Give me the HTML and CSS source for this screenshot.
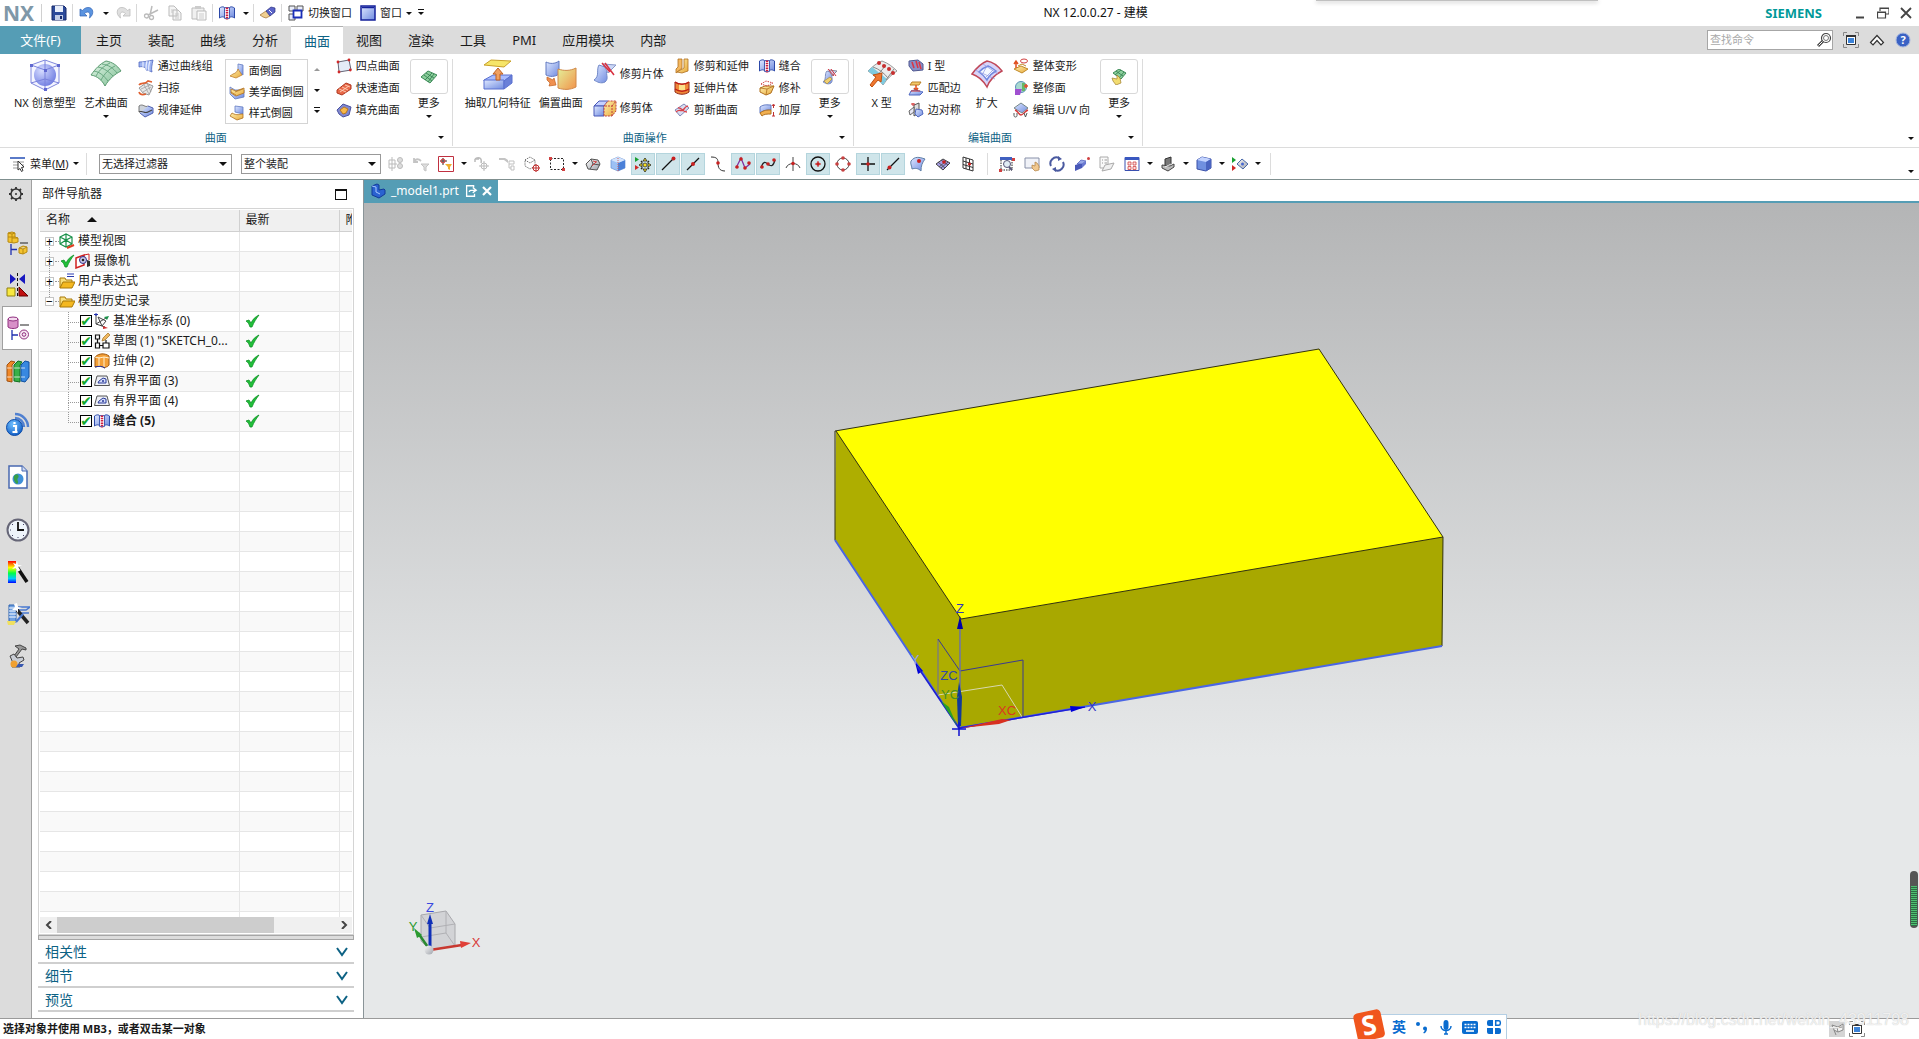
FILE: index.html
```html
<!DOCTYPE html>
<html lang="zh-CN">
<head>
  <meta charset="UTF-8">
  <title>NX 12.0.0.27 - 建模</title>
  <link rel="stylesheet" href="styles.css">
</head>
<body>
<!-- 图标库 -->
<svg class="sprite" aria-hidden="true">
  <defs>
    <linearGradient id="gb" x1="0" y1="0" x2="1" y2="1"><stop offset="0" stop-color="#dfe8ff"/><stop offset="1" stop-color="#6f8be0"/></linearGradient>
    <linearGradient id="gy" x1="0" y1="0" x2="1" y2="1"><stop offset="0" stop-color="#fff0b0"/><stop offset="1" stop-color="#e8a93a"/></linearGradient>
    <linearGradient id="go" x1="0" y1="0" x2="1" y2="1"><stop offset="0" stop-color="#e4f09a"/><stop offset="1" stop-color="#f2934a"/></linearGradient>
    <linearGradient id="gg" x1="0" y1="0" x2="1" y2="1"><stop offset="0" stop-color="#e2f5e6"/><stop offset="1" stop-color="#7fbf95"/></linearGradient>
    <linearGradient id="gs" x1="0" y1="0" x2="1" y2="1"><stop offset="0" stop-color="#f8f8f8"/><stop offset="1" stop-color="#a0a4ac"/></linearGradient>
    <linearGradient id="rain" x1="0" y1="0" x2="0" y2="1"><stop offset="0" stop-color="#f00"/><stop offset=".3" stop-color="#ff0"/><stop offset=".55" stop-color="#0f4"/><stop offset=".8" stop-color="#0cf"/><stop offset="1" stop-color="#00f"/></linearGradient>
    <radialGradient id="ball" cx=".35" cy=".3" r=".8"><stop offset="0" stop-color="#d6dcff"/><stop offset="1" stop-color="#6a78e0"/></radialGradient>
    <radialGradient id="badge" cx=".4" cy=".3" r=".8"><stop offset="0" stop-color="#6fc0ff"/><stop offset="1" stop-color="#0a55c0"/></radialGradient>
  </defs>

  <!-- 标题栏 -->
  <symbol id="save" viewBox="0 0 16 16"><path d="M1 1h12l2 2v12H1z" fill="#2c4a9a" stroke="#16286a"/><path d="M4 1h8v6H4z" fill="#e8eefa"/><path d="M4 10h8v5H4z" fill="#c3cde6"/><path d="M9 11h2v3H9z" fill="#16286a"/></symbol>
  <symbol id="undo" viewBox="0 0 16 16"><path d="M1 4v7h7L5.500 8.500C9 5.500 12 7 10.500 13 16 9 14 2 9 2.500 6.500 2.500 4.500 4 3.500 5.500z" fill="#5b94e0" stroke="#2f63b5" stroke-width=".7"/></symbol>
  <symbol id="redo" viewBox="0 0 16 16"><path d="M15 4v7H8l2.500-2.500C7 5.500 4 7 5.500 13 0 9 2 2 7 2.500c2.500 0 4.500 1.500 5.500 3z" fill="#e0e0e0" stroke="#bdbdbd" stroke-width=".8"/></symbol>
  <symbol id="cut" viewBox="0 0 16 16"><path d="M9 1 7 10M15 5 5 10" stroke="#bbb" stroke-width="1.500"/><circle cx="3.500" cy="11" r="2" fill="none" stroke="#bbb" stroke-width="1.300"/><circle cx="8.500" cy="12.500" r="2" fill="none" stroke="#bbb" stroke-width="1.300"/></symbol>
  <symbol id="copy" viewBox="0 0 16 16"><path d="M2 1h5l3 3v7H2zM6 5h5l3 3v7H6z" fill="#f4f4f4" stroke="#bbb"/><path d="M8 9h4M8 11h4M8 13h4M4 5h2M4 7h2" stroke="#c8c8c8"/></symbol>
  <symbol id="paste" viewBox="0 0 16 16"><path d="M1 3h12v11H1z" fill="#f0f0f0" stroke="#bbb"/><path d="M4 1h6v3H4z" fill="#ccc"/><path d="M6 6h9v9H6z" fill="#fafafa" stroke="#bbb"/><path d="M8 9h5M8 11h5M8 13h5" stroke="#ccc"/></symbol>
  <symbol id="book" viewBox="0 0 16 16"><path d="M.500 3c3-2 5-1 5 0v10c0-1-2-2-5 0zM15.500 3c-3-2-5-1-5 0v10c0-1 2-2 5 0z" fill="url(#gb)" stroke="#2b48a8"/><path d="M5.500 2.500h5v11h-5z" fill="#fff" stroke="#2b48a8" stroke-width=".8"/><path d="M8 2.500v12" stroke="#d02040" stroke-width="2.500" stroke-dasharray="1.500 .800"/></symbol>
  <symbol id="pen" viewBox="0 0 16 16"><path d="M0 10 6 6l4 1v4l-4 2-3-1z" fill="#f0cf90" stroke="#a07030" stroke-width=".7"/><path d="m6 6 5-4 4 1v4l-5 4z" fill="#5a63c8" stroke="#2a2f80" stroke-width=".7"/><path d="m9 5 3 3" stroke="#fff"/></symbol>
  <symbol id="switch" viewBox="0 0 16 16"><path d="M1 1h6v5H1zM9 1h6v5H9zM1 9h6v6H1z" fill="#e8ecf8" stroke="#555" /><path d="M5.500 5.500h8v7h-8z" fill="#fff" stroke="#1a2fb8" stroke-width="1.800"/></symbol>
  <symbol id="window" viewBox="0 0 16 16"><path d="M1 1h14v14H1z" fill="url(#gb)" stroke="#14209a" stroke-width="1.500"/><path d="M2 2.500h12" stroke="#14209a" stroke-width="1.500"/></symbol>
  <symbol id="fit" viewBox="0 0 16 16"><path d="M4 .500H.500V4M12 .500h3.500V4M4 15.500H.500V12M12 15.500h3.500V12" fill="none" stroke="#888"/><path d="M3.500 3.500h9v9h-9z" fill="#fff" stroke="#333"/><path d="M3 4h10" stroke="#333" stroke-width="2"/><path d="M5 6h6v5H5z" fill="#3c83d8"/></symbol>
  <symbol id="lens" viewBox="0 0 16 16"><circle cx="10" cy="6" r="4.500" fill="#fff" stroke="#444" stroke-width="1.200"/><circle cx="10" cy="6" r="2.500" fill="none" stroke="#555" stroke-width=".8"/><path d="m7 9-5 5" stroke="#444" stroke-width="3"/><path d="m6.500 9.500-4 4" stroke="#fff"/></symbol>
  <symbol id="up" viewBox="0 0 16 16"><path d="m1.500 10.500 6.500-7 6.500 7-2.500 2.500-4-4.500L4 13z" fill="#fff" stroke="#333" stroke-width="1.200"/></symbol>

  <!-- 功能区：大图标 -->
  <symbol id="nxshape" viewBox="0 0 32 32"><path d="M16 1 30 6v18l-14 7L2 24V6z" fill="#f4f5ff" stroke="#8088dc"/><circle cx="16" cy="16" r="11" fill="url(#ball)"/><path d="m2 6 14 5 14-5M16 11v20M16 1v10M2 24l14-4 14 4" fill="none" stroke="#7a82dc"/><path d="M1 5h3v3H1zM28 5h3v3h-3zM15 10h3v3h-3zM15 29h3v3h-3z" fill="#6068d0"/></symbol>
  <symbol id="artsurf" viewBox="0 0 32 32"><path d="M1 16C6 9 10 5 16 2c6 1 11 4 15 10-6 3-12 8-16 15-3-6-8-10-14-11z" fill="url(#gg)" stroke="#5a9a70"/><path d="M4 12c6 1 10 5 14 10M8 8c6 1 11 5 15 9M12 5c7 1 11 4 15 9M6 17c4-7 8-10 14-13M11 21c4-7 8-11 14-14" fill="none" stroke="#5fa078" stroke-width=".9"/></symbol>
  <symbol id="extract" viewBox="0 0 32 32"><path d="m9 1 20 1-7 6L2 6z" fill="#f6e568" stroke="#c8a028"/><path d="m2 21 9-5h19l-8 6H2z" fill="#a8bcff" stroke="#5a70d0"/><path d="M2 21h20v9H2z" fill="url(#gb)" stroke="#5a70d0"/><path d="m22 22 8-6v8l-8 6z" fill="#6a80d8" stroke="#5a70d0"/><path d="m16 9 5 6h-3v6h-4v-6h-3z" fill="#f0a060" stroke="#c06020"/></symbol>
  <symbol id="offset" viewBox="0 0 32 32"><path d="M1 3c4 2 9 2 13-1v13c-4 3-9 3-13 1z" fill="url(#gb)" stroke="#6078c0"/><path d="M13 10c6 2 12 2 18-1v19c-6 3-12 3-18 1z" fill="url(#go)" stroke="#d08848"/><path d="m2 18 6 3 1-2 2 7-7 1 1-3-3-3z" fill="#f09050" stroke="#c06020" stroke-width=".7"/></symbol>
  <symbol id="trimsheet" viewBox="0 0 24 24"><path d="m6 3 9 3c-4 5 2 10-3 14-4 2-8 0-11-2 6-4 2-10 5-15z" fill="url(#gb)" stroke="#7088c8"/><path d="m10 2 13 1-8 8z" fill="#ccd8f8" stroke="#8898c8"/><path d="m9 1 8 9M12 1l9 12" stroke="#d83040" stroke-width="1.500"/></symbol>
  <symbol id="trimbody" viewBox="0 0 24 24"><path d="m1 10 5-5h9l-4 5z" fill="#c4d0ff" stroke="#4858b8"/><path d="M1 10h10v10H1z" fill="url(#gb)" stroke="#4858b8"/><path d="m11 10 4-5h8v10l-4 5h-8z" fill="url(#gy)" stroke="#c04040" stroke-dasharray="2 1"/><path d="M19 20V10h-8M19 10l4-5" fill="none" stroke="#c04040" stroke-dasharray="2 1"/></symbol>
  <symbol id="xform" viewBox="0 0 32 32"><path d="M2 12C7 7 11 4 16 2c6 2 11 6 15 10-5 3-10 8-14 14-4-6-9-10-15-14z" fill="#ececec" stroke="#999"/><path d="M2 12c5 4 10 8 15 14l4-6C16 16 11 12 6 8z" fill="#7fcbe0"/><path d="M7 8c6 2 11 6 15 11M11 17l9-11M20 21 28 10" fill="none" stroke="#888"/><path d="m4 26 6-8-3-2 9-2-1 9-3-2-6 7z" fill="#f07830" stroke="#c05010"/><circle cx="13" cy="4" r="2" fill="#c83030"/><circle cx="18" cy="7" r="2" fill="#c83030"/><circle cx="23" cy="10" r="2" fill="#c83030"/><circle cx="27" cy="14" r="2" fill="#c83030"/></symbol>
  <symbol id="enlarge" viewBox="0 0 32 32"><path d="M1 15C6 8 11 4 16 2c6 1 11 5 15 10-6 3-12 8-15 16-4-7-9-11-15-13z" fill="#d8d4f8" stroke="#c04858" stroke-width="1.500"/><path d="M8 13c3-3 6-5 9-6 3 1 5 3 8 5-4 2-7 5-9 9-2-3-5-6-8-8z" fill="#f4f8ff" stroke="#7088e0" stroke-width="1.500"/><path d="m4 11 20 9M12 5l15 10M16 7l-5 9M23 10l-9 9" fill="none" stroke="#8a94e0" stroke-width=".7"/></symbol>
  <symbol id="moregreen" viewBox="0 0 16 16"><path d="M0 8 7 2l9 4-7 8z" fill="#8ccf9c" stroke="#3d8a58"/><path d="m3 6 8 6M5 4l8 5M4 11l7-7M7 13l6-8" stroke="#2f7a4c" stroke-width=".8"/></symbol>
  <symbol id="moretrim" viewBox="0 0 16 16"><path d="m5 2 6 2c-3 3 1 7-2 10-3 2-6 0-8-1 4-3 1-8 4-11z" fill="url(#gb)" stroke="#8090c0"/><path d="m7 1 8 1-5 5z" fill="#d0d8f0" stroke="#889"/><path d="m6 0 6 7M9 0l5 7" stroke="#d83040"/><path d="m2 12 6-4 2 2-5 5z" fill="#f0d070" stroke="#a08030" stroke-width=".6"/></symbol>
  <symbol id="moreedit" viewBox="0 0 16 16"><path d="m2 4 6-4 7 4-5 6z" fill="#8ccf9c" stroke="#3d8a58"/><path d="m5 2 7 5M4 6l6-5M8 9l5-6" stroke="#2f7a4c" stroke-width=".8"/><path d="m1 9 5 1v-4l3 3 1 5-5 2-3-4z" fill="#f2dc70" stroke="#a08030" stroke-width=".7"/></symbol>

  <!-- 功能区：小图标 -->
  <symbol id="curves" viewBox="0 0 16 16"><path d="M1 4c5 0 9-1 14-2-1 5-2 9-1 12-3-1-3-2-6-2 0-3-3-4-7-3z" fill="#9cb2f0" stroke="#5068c0" stroke-width=".8"/><path d="M5 4v5M9 3c-1 3-1 6-1 9M12 3c-1 3-2 6-1 10" fill="none" stroke="#e8eeff" stroke-width="1.200"/></symbol>
  <symbol id="sweep" viewBox="0 0 16 16"><path d="m1 8 7-5 7 3-4 9-6-2z" fill="#e6e6e6" stroke="#999"/><path d="m3 9 9-4M5 12l8-5M6 5l5 9M9 3l4 9" stroke="#999" stroke-width=".7"/><path d="M1 5c2-3 6 0 9-4l4 1M1 12c1 3 4 3 7 2" fill="none" stroke="#e06030" stroke-width="1.600"/></symbol>
  <symbol id="lawext" viewBox="0 0 16 16"><path d="M1 4c4-3 6 2 9 0v6c-4 2-6-2-9 0z" fill="#ccd2da" stroke="#777"/><path d="m10 4 5 2v5l-8 4-5-4" fill="url(#gb)" stroke="#5060b0"/><path d="M1 10c4-2 5 2 9 0l4-2" fill="none" stroke="#444" stroke-width="1.200"/></symbol>
  <symbol id="blendface" viewBox="0 0 16 16"><path d="m9 1 5 1v10L9 9z" fill="url(#gb)" stroke="#6078c0" stroke-width=".8"/><path d="m9 6 4 6-6 3-6-2 3-2c3-1 4-2 5-5z" fill="url(#gy)" stroke="#c08030" stroke-width=".8"/></symbol>
  <symbol id="blendart" viewBox="0 0 16 16"><path d="m1 3 5 3h9v7l-9 2-5-5z" fill="url(#gb)" stroke="#6078c0" stroke-width=".8"/><path d="m2 5 5 2 8-3v5l-8 3-5-3z" fill="url(#gy)" stroke="#b07020" stroke-width=".8"/><path d="m6 8 8-3M2 8l5 3" stroke="#b07020" stroke-width=".7"/></symbol>
  <symbol id="blendstyle" viewBox="0 0 16 16"><path d="m6 1 8 1v7l-8-2z" fill="url(#gb)" stroke="#6078c0" stroke-width=".8"/><path d="M3 8c5 3 8 1 11 1v4l-6 2-7-4z" fill="url(#gy)" stroke="#b07020" stroke-width=".8"/></symbol>
  <symbol id="fourpt" viewBox="0 0 16 16"><path d="m2 4 11-2 2 10-12 2z" fill="#e4ebf8" stroke="#667"/><circle cx="2" cy="4" r="1.400" fill="#d02828"/><circle cx="13" cy="2" r="1.400" fill="#d02828"/><circle cx="14.300" cy="12" r="1.400" fill="#d02828"/><circle cx="3" cy="14" r="1.400" fill="#d02828"/></symbol>
  <symbol id="rapid" viewBox="0 0 16 16"><path d="m1 10 9-7 5 2v4l-9 6-5-2z" fill="#e86848" stroke="#b03820"/><path d="m3 9 7 3M6 7l6 3M9 5l5 2M4 12l9-6" stroke="#ffd0b8" stroke-width=".9"/></symbol>
  <symbol id="fillsurf" viewBox="0 0 16 16"><path d="m1 8 6-6 8 3-2 8-6 2-4-3z" fill="#8088d0" stroke="#4a52a0"/><path d="m4 8 4-3 4 2-2 4-3 1z" fill="#f8b848" stroke="#b87820"/></symbol>
  <symbol id="trimext" viewBox="0 0 16 16"><path d="M4 1h4v9l-6 5v-4l2-2z" fill="#f4b860" stroke="#b07020" stroke-width=".8"/><path d="M10 1h4v12l-6 2-5-1 7-4z" fill="url(#gy)" stroke="#b07020" stroke-width=".8"/></symbol>
  <symbol id="extsheet" viewBox="0 0 16 16"><path d="M1 2c4 3 10 3 14 0v10c-4 3-10 3-14 0z" fill="#f08838" stroke="#902818"/><path d="M5 4v6c2 1 4 1 6 0V4c-2 1-4 1-6 0z" fill="#fbe08a"/><path d="M1 2c4 3 10 3 14 0M1 9c4 3 10 3 14 0" fill="none" stroke="#c02018" stroke-width="1.500"/></symbol>
  <symbol id="snip" viewBox="0 0 16 16"><path d="m1 8 9-6 5 4-9 8z" fill="#d8dcf0" stroke="#8088b8"/><path d="M2 10c4-4 5 1 8-3s2-2 4-3M4 6c4-1 4 4 9 4" fill="none" stroke="#d84048" stroke-width="1.400"/></symbol>
  <symbol id="patch" viewBox="0 0 16 16"><path d="m1 8 5-2h9l-3 7-5 2-6-3z" fill="url(#gy)" stroke="#b07020"/><path d="m7 15 1-6 7-3M1 8l7 1" fill="none" stroke="#b07020" stroke-width=".8"/><path d="m2 4 5-3 7 2-6 3z" fill="none" stroke="#d04040" stroke-dasharray="1.500 1"/></symbol>
  <symbol id="thicken" viewBox="0 0 16 16"><path d="M1 5c4-3 7-2 11-2v5C8 8 5 8 1 11z" fill="url(#gb)" stroke="#6078c0"/><path d="M1 11c4-3 7-3 11-3v4c-4 0-7 0-9 2z" fill="#f2b050" stroke="#b07020"/><path d="M14.500 3v3M14.500 10v4M13 14h3M13 4l1.500-2L16 4" stroke="#c03030" fill="none"/></symbol>
  <symbol id="iform" viewBox="0 0 16 16"><path d="m1 3 9-1 5 4v6l-10 1-4-5z" fill="#8890c8" stroke="#505890"/><path d="m4 4 2 6M8 3l2 7M11 4l2 7" stroke="#d83848" stroke-width="1.600"/></symbol>
  <symbol id="matchedge" viewBox="0 0 16 16"><path d="M4 2h9l-2 3H2z" fill="#f4c868" stroke="#b88028"/><path d="M8 5v5M6 8l2 3 2-3" stroke="#e05020" fill="none" stroke-width="1.500"/><path d="M3 11c4-2 8 0 12 1l-3 3H1z" fill="url(#gb)" stroke="#5068c0"/><path d="M3 11h9" stroke="#d03030"/></symbol>
  <symbol id="edgesym" viewBox="0 0 16 16"><path d="m6 3 5-2v10l-5 3z" fill="#ddd" stroke="#555"/><path d="m8 7 6 1 1 4-5 3-3-3z" fill="url(#gb)" stroke="#5068c0"/><path d="m1 9 5-4v5l-4 3z" fill="#e8e8f4" stroke="#666"/><path d="M3 2h4M5 1v3" stroke="#d03030"/></symbol>
  <symbol id="globaldef" viewBox="0 0 16 16"><path d="m1 11 7-3 7 3-6 4z" fill="url(#gy)" stroke="#c08828"/><path d="M3 10V4M1 6l2-3 2 3" stroke="#e05020" fill="none" stroke-width="1.500"/><ellipse cx="11" cy="3" rx="3.500" ry="2" fill="none" stroke="#d04040"/><path d="m5 8 4-2 4 2" fill="none" stroke="#c08828"/></symbol>
  <symbol id="refine" viewBox="0 0 16 16"><circle cx="8" cy="7" r="5.500" fill="#a8d8d0" stroke="#5890b8"/><path d="M2 9h7l-2 6H2z" fill="#a050d0"/><path d="M9 3h3v8H9z" fill="#68b868"/><path d="M11 6h4M13 4v4" stroke="#e05030" stroke-width="1.600"/></symbol>
  <symbol id="edituv" viewBox="0 0 16 16"><path d="m1 6 7-5 7 5-6 5z" fill="url(#gb)" stroke="#788"/><path d="M2 8c3 1 4 5 6 5s4-4 7-5" fill="none" stroke="#d83838" stroke-width="1.400"/><path d="M1 11v2.500c0 2 3 2 3 0V11M11 11l1.500 4 1.500-4" fill="none" stroke="#555"/></symbol>

  <!-- 选择条 -->
  <symbol id="menu" viewBox="0 0 16 16"><path d="M0 2h15" stroke="#5a7ac8" stroke-width="2"/><path d="M3 6h11M3 9h11M3 12h9" stroke="#999"/><path d="m8 5 6 6-2.500.5 1.500 3-1.500 1-1.500-3L8 14z" fill="#fff" stroke="#333"/></symbol>
  <symbol id="f1" viewBox="0 0 16 16"><path d="M1 4h6v8H1zM4 1v14M1 8h8" stroke="#bbb" fill="none"/><circle cx="12" cy="4" r="2.500" fill="#ddd" stroke="#bbb"/><circle cx="12" cy="10" r="2.500" fill="#ddd" stroke="#bbb"/></symbol>
  <symbol id="f2" viewBox="0 0 16 16"><path d="M1 2v4h4M1 6c2-4 5-3 7-1" stroke="#c4c4c4" fill="none" stroke-width="1.800"/><path d="M8 8h8l-3 3v4l-2-1v-3z" fill="#ddd" stroke="#c4c4c4"/></symbol>
  <symbol id="f3" viewBox="0 0 16 16"><path d="M.500.500h15v15H.500z" fill="#fff" stroke="#c03040"/><path d="M5 2v7M2 5h7" stroke="#333"/><circle cx="5" cy="5" r="2" fill="none" stroke="#d03030"/><path d="M7 8h7l-2 3v3l-2-1v-2z" fill="#f0b030"/></symbol>
  <symbol id="f4" viewBox="0 0 16 16"><path d="M1 3h4M1 3v3M1 3c5-3 7 0 6 4" stroke="#bbb" fill="none" stroke-width="1.500"/><circle cx="10" cy="10" r="3" fill="none" stroke="#bbb"/><path d="M10 5v10M5 10h10" stroke="#bbb"/></symbol>
  <symbol id="f5" viewBox="0 0 16 16"><path d="M0 2h6l3 2v3L5 4H0z" fill="#c4c4c4"/><path d="M10 5h5v3h-5zM12 10h3v4h-3zM10 8v4h2" stroke="#c0c0c0" fill="none"/></symbol>
  <symbol id="f6" viewBox="0 0 16 16"><path d="m1 4 5-3 5 3v6l-5 3-5-3zM1 4l5 3 5-3" fill="none" stroke="#444" stroke-dasharray="1 1.200"/><circle cx="12" cy="12" r="3" fill="#fff" stroke="#c03030"/><path d="M12 8v8M8 12h8" stroke="#c03030"/></symbol>
  <symbol id="f7" viewBox="0 0 16 16"><path d="M1.500 2.500h13v11h-13z" fill="none" stroke="#222" stroke-dasharray="2 1.500"/><path d="M0 1h3v3H0zM13 12h3v3h-3z" fill="#d04040"/></symbol>
  <symbol id="f8" viewBox="0 0 16 16"><path d="m1 8 5-5 7 1 2 4-3 6-9-1z" fill="url(#gs)" stroke="#555"/><path d="m6 3 2 5-3 5M8 8l7 1" stroke="#555" fill="none"/><path d="m8 5 4 1M7 10l4-4" stroke="#d04040"/></symbol>
  <symbol id="f9" viewBox="0 0 16 16"><path d="m1 4 7-3 7 3v8l-7 3-7-3z" fill="#9cc0f4" stroke="#6890d0" stroke-width=".7"/><path d="M8 7v8l7-3V4z" fill="#4a80d8"/><path d="m1 4 7-3 7 3-7 3z" fill="#d4e4fc"/><path d="M8 2v13" stroke="#d06060" stroke-dasharray="1 1"/></symbol>
  <symbol id="s1" viewBox="0 0 16 16"><path d="m0 1 4 2.500L0 6z" fill="#18a030"/><path d="m0 9 4 2.500L0 14z" fill="#d02828"/><circle cx="10" cy="9" r="2" fill="#f8e020" stroke="#333" stroke-width=".8"/><path d="m10 2 2 3h-4zM10 16l2-3h-4zM4 9l3-2v4zM16 9l-3-2v4z" fill="#f8e020" stroke="#222" stroke-width=".8"/><path d="m6 5 1.500 1.500M14 5l-1.500 1.500M6 13l1.500-1.500M14 13l-1.500-1.500" stroke="#222" stroke-width="1.500"/></symbol>
  <symbol id="s2" viewBox="0 0 16 16"><path d="M2 14 13 3" stroke="#111" stroke-width="1.300"/><circle cx="13.500" cy="2.500" r="2" fill="#c82020"/></symbol>
  <symbol id="s3" viewBox="0 0 16 16"><path d="M2 14 14 2" stroke="#111" stroke-width="1.300"/><circle cx="8" cy="8" r="2" fill="#c82020"/></symbol>
  <symbol id="s4" viewBox="0 0 16 16"><path d="M1 1c6 0 7 2 7 6s1 8 7 8" fill="none" stroke="#333"/><circle cx="8" cy="7" r="1.800" fill="#c82020"/></symbol>
  <symbol id="s5" viewBox="0 0 16 16"><path d="M1 12 6 2l4 10 5-4" fill="none" stroke="#8030a0" stroke-width="1.300"/><circle cx="2" cy="11" r="1.800" fill="#c82020"/><circle cx="6" cy="3" r="1.800" fill="#c82020"/><circle cx="10" cy="12" r="1.800" fill="#c82020"/><circle cx="14" cy="7" r="1.800" fill="#c82020"/></symbol>
  <symbol id="s6" viewBox="0 0 16 16"><path d="M1 12C4 2 7 8 9 9s4 2 6-5" fill="none" stroke="#222" stroke-width="1.300"/><circle cx="2" cy="11" r="1.800" fill="#c82020"/><circle cx="8" cy="8" r="1.800" fill="#c82020"/><circle cx="14" cy="4" r="1.800" fill="#c82020"/></symbol>
  <symbol id="s7" viewBox="0 0 16 16"><path d="M8 1v14M1 12c2-6 12-6 14 0" fill="none" stroke="#444"/><circle cx="8" cy="7.500" r="1.800" fill="#c82020"/></symbol>
  <symbol id="s8" viewBox="0 0 16 16"><circle cx="8" cy="8" r="7" fill="none" stroke="#111" stroke-width="1.300"/><path d="M8 5v6M5 8h6" stroke="#c82020"/><circle cx="8" cy="8" r="1.800" fill="#c82020"/></symbol>
  <symbol id="s9" viewBox="0 0 16 16"><circle cx="8" cy="8" r="6" fill="none" stroke="#444"/><circle cx="8" cy="2" r="1.800" fill="#c84040"/><circle cx="8" cy="14" r="1.800" fill="#c84040"/><circle cx="2" cy="8" r="1.800" fill="#c84040"/><circle cx="14" cy="8" r="1.800" fill="#c84040"/></symbol>
  <symbol id="s10" viewBox="0 0 16 16"><path d="M8 1v14M1 8h14" stroke="#111" stroke-width="1.300"/><circle cx="8" cy="8" r="1.800" fill="#c82020"/></symbol>
  <symbol id="s11" viewBox="0 0 16 16"><path d="M2 14 14 2" stroke="#111" stroke-width="1.300"/><circle cx="4.500" cy="11.500" r="2" fill="#c82020"/></symbol>
  <symbol id="s12" viewBox="0 0 16 16"><path d="M1 5c4-5 8-4 14-2-3 4-4 7-4 12-3-3-6-3-9-2 0-3-2-5-1-8z" fill="url(#gb)" stroke="#6080a8"/><circle cx="9" cy="5" r="2" fill="#c82020"/></symbol>
  <symbol id="s13" viewBox="0 0 16 16"><path d="m1 8 7-5 7 4-7 7z" fill="#a8a0e8" stroke="#444"/><path d="m3 6 7 6M6 4l7 5M4 11l7-6M6 12l7-6" stroke="#444" stroke-width=".8"/><circle cx="9" cy="6" r="1.800" fill="#c82020"/></symbol>
  <symbol id="s14" viewBox="0 0 16 16"><path d="M3 1v11l10 3V4zM3 5l10 3M3 8.500l10 3M6 2v11M9.500 3v11" fill="none" stroke="#333"/><circle cx="9.500" cy="8" r="1.600" fill="#c82020"/></symbol>
  <symbol id="v1" viewBox="0 0 16 16"><path d="M1 1h12v3H1z" fill="#4060c0"/><path d="M2 4v10h11V4" fill="none" stroke="#222" stroke-dasharray="1.500 1"/><circle cx="8" cy="8" r="3.500" fill="#e0ecf4" stroke="#557"/><path d="m10 11 3 3" stroke="#557" stroke-width="2"/><path d="M13 2h3v3h-3zM0 13h3v3H0z" fill="#d04040"/></symbol>
  <symbol id="v2" viewBox="0 0 16 16"><path d="M1 2h14v10H1z" fill="#f0f2f8" stroke="#8890a8"/><path d="m8 9 3 1V6l2 1 2 3v4l-4 1-3-3z" fill="#f0c890" stroke="#b08040" stroke-width=".7"/></symbol>
  <symbol id="v3" viewBox="0 0 16 16"><path d="M2 10a6 6 0 0 1 8-8M14 6a6 6 0 0 1-8 8" fill="none" stroke="#4a5aa0" stroke-width="2"/><path d="m9 0 4 3-4 2zM7 16l-4-3 4-2z" fill="#4a5aa0"/></symbol>
  <symbol id="v4" viewBox="0 0 16 16"><path d="m1 9 7-2v5l-7 3z" fill="#4858b8"/><path d="m3 8 4-4 5 1-4 3z" fill="#98a8e8" stroke="#4858b8" stroke-width=".7"/><path d="m8 8 4-3v3l-4 4z" fill="#6878d0"/><circle cx="14.500" cy="2.500" r="1.500" fill="#d04040"/></symbol>
  <symbol id="v5" viewBox="0 0 16 16"><path d="M1 1h8v11H1z" fill="#fafafa" stroke="#aaa"/><path d="M3 4h1M5.500 4H8M3 7h1M5.500 7H8" stroke="#999"/><path d="m6 9 9-2-3 6-9 2z" fill="#f0f0f0" stroke="#aaa"/></symbol>
  <symbol id="v6" viewBox="0 0 16 16"><path d="M1 1.500h14v13H1z" fill="#fff" stroke="#3a50b0"/><path d="M1 1h14v3H1z" fill="#3a58c0"/><path d="M4 6h3v3H4zM9 6h3v3H9zM4 10.500h3v3H4zM9 10.500h3v3H9z" fill="#fbe0e0" stroke="#d04848" stroke-width=".8"/></symbol>
  <symbol id="v7" viewBox="0 0 16 16"><path d="m5 3 6-2v7l-6 3z" fill="#777" stroke="#333"/><path d="m2 9 8 1 4-2v3l-6 4-6-3z" fill="#bbb" stroke="#444"/><path d="m5 11 6-3" stroke="#eee"/></symbol>
  <symbol id="v8" viewBox="0 0 16 16"><path d="m1 4 5-3 9 2v9l-5 3-9-2z" fill="#7090e0" stroke="#3a50a8"/><path d="m1 4 5-3 9 2-5 3z" fill="#c4d4ff"/><path d="m10 6 5-3v9l-5 3z" fill="#4a64c0"/></symbol>
  <symbol id="v9" viewBox="0 0 16 16"><path d="m0 1 4 3-4 3z" fill="#18a030"/><path d="m0 9 4 3-4 3z" fill="#d02828"/><path d="m5 8 5-5 6 5-5 5z" fill="url(#gs)" stroke="#4868a8"/><circle cx="10.500" cy="8" r="1.500" fill="#4868d0"/></symbol>

  <!-- 资源条 -->
  <symbol id="gear" viewBox="0 0 16 16"><circle cx="8" cy="8" r="5" fill="none" stroke="#333" stroke-width="1.400"/><circle cx="8" cy="8" r="1" fill="#333"/><path d="M8 1v2M8 13v2M1 8h2M13 8h2M3 3l1.500 1.500M11.500 11.500 13 13M3 13l1.500-1.500M11.500 4.500 13 3" stroke="#333" stroke-width="1.800"/></symbol>
  <symbol id="assy" viewBox="0 0 24 24"><path d="M2 2 6 1l3 1v4l3 1v4l-4 1-6-1z" fill="#f4c430" stroke="#b88a10"/><path d="m2 6 7 0M2 2l4 1 3-1M6 3v9M6 7l6 0" stroke="#b88a10" fill="none"/><path d="M14 12h8" stroke="#222"/><path d="M5 13v11M5 18.500h6" stroke="#2030b0" stroke-width="1.300"/><path d="m13 17 4-2 4 1v5l-4 2-4-1zM13 17l4 1 4-2M17 18v5" fill="#f4c430" stroke="#b88a10"/></symbol>
  <symbol id="constraint" viewBox="0 0 24 24"><path d="m4 1 6 5-6 5zM19 1l-6 5 6 5z" fill="#1818c0"/><path d="M11.500 0v24" stroke="#111" stroke-dasharray="3 2"/><path d="M1 15h8v8H1z" fill="#f8e840" stroke="#908010"/><path d="M13 14v9h9z" fill="#c01010" stroke="#600"/></symbol>
  <symbol id="partnav" viewBox="0 0 24 24"><path d="M1 3v8c2 2 8 2 10 0V3z" fill="#d890c8" stroke="#903080"/><ellipse cx="6" cy="3" rx="5" ry="2" fill="#f4d8ee" stroke="#903080"/><path d="M13 9h9" stroke="#222"/><path d="M5 14v10M5 19h6" stroke="#2030b0" stroke-width="1.300"/><circle cx="17" cy="18.500" r="4.500" fill="#f8e8f4" stroke="#903080"/><circle cx="17" cy="18.500" r="1.800" fill="none" stroke="#903080"/></symbol>
  <symbol id="library" viewBox="0 0 24 24"><path d="m1 6 4-4 4 1-3 3v17l-5-1z" fill="#f08828" stroke="#a05010"/><path d="m8 6 4-4 4 1-2 3v17l-6-1z" fill="#38b048" stroke="#107020"/><path d="m15 6 4-4 4 1v15l-4 5-4-1z" fill="#3888e0" stroke="#1050a0"/><path d="M1 9h5M8 9h6M15 9h4M1 18h5M8 18h6M15 18h4" stroke="#fff" stroke-opacity=".7"/></symbol>
  <symbol id="hd3d" viewBox="0 0 24 24"><path d="M9 2a13 13 0 0 1 13 13M9 6a9 9 0 0 1 9 9" fill="none" stroke="#5080d0" stroke-width="2.500"/><circle cx="8.500" cy="15.500" r="8" fill="url(#badge)" stroke="#0a4aa8"/><path d="M7 14h3v5M6.500 20h5M8.500 10v2" stroke="#fff" stroke-width="2.200" fill="none"/></symbol>
  <symbol id="web" viewBox="0 0 24 24"><path d="M3 1h13l5 5v17H3z" fill="#fff" stroke="#4868b0" stroke-width="1.500"/><path d="M16 1v5h5" fill="#d0dcf4" stroke="#4868b0"/><circle cx="12" cy="14" r="5.500" fill="#4090d8"/><path d="M8 11c3-4 6 0 4 2s2 4-1 6c-2-1-4-5-3-8z" fill="#38a048"/></symbol>
  <symbol id="history" viewBox="0 0 24 24"><circle cx="12" cy="12" r="10.500" fill="#eef4fb" stroke="#667" stroke-width="2"/><path d="M12 4v8h6" fill="none" stroke="#111" stroke-width="1.800"/><path d="M12 20v-1M4 12h1M6 6l1 1M18 18l-1-1M6 18l1-1M18 6l-1 1" stroke="#446"/></symbol>
  <symbol id="palette" viewBox="0 0 24 24"><path d="M2 1h8v22H2z" fill="url(#rain)"/><path d="m11 7 10 15" stroke="#111" stroke-width="3.500"/><path d="m10 6 3 5" stroke="#fff" stroke-width="3"/><path d="m11 1 1 4 4 0-4 2v4l-2-3-4 1 3-3-2-3 3 1z" fill="#fff"/></symbol>
  <symbol id="process" viewBox="0 0 24 24"><path d="M3 3h7v17H3z" fill="#70a0e0" stroke="#2860b0"/><path d="M3 6h7M3 9h7M3 12h7M3 15h7" stroke="#fff"/><path d="M12 5h12l-4 3h-8M14 11h9" fill="none" stroke="#4878d0" stroke-width="1.500"/><path d="m11 8 11 13" stroke="#222" stroke-width="3.500"/><path d="m17 12-7 8" stroke="#4878d0" stroke-width="2"/><path d="M1 19h9l-2 4H2z" fill="#f0e060"/><path d="m11 1 1 4 4 1-4 1v4l-2-3-4 0 3-3-1-3z" fill="#fff"/></symbol>
  <symbol id="roles" viewBox="0 0 24 24"><path d="m9 2 5-1 6 3v2l-4-1-6 8-2-1 5-7z" fill="#999" stroke="#444"/><path d="m4 12 4-2 3 4 6-1 1 3-5 3 1 4H6l1-4z" fill="#c8ccd4" stroke="#444"/><circle cx="8" cy="20" r="3.500" fill="#f0a030"/><path d="M12 20h6l-2 3h-6z" fill="#3858b0"/></symbol>

  <!-- 导航树 -->
  <symbol id="tick" viewBox="0 0 16 16"><path d="m2 8 3-1 2 3c2-4 4-6 8-8-3 4-5 7-7 12H6C5 11 4 9 2 8z" fill="#20c038" stroke="#109028" stroke-width=".8"/></symbol>
  <symbol id="mview" viewBox="0 0 16 16"><path d="m1 4 6-3 6 3v7l-6 3-6-3zM1 4l6 3 6-3M7 1v13M1 11l6-4 6 4" fill="none" stroke="#189048" stroke-width="1.200"/><path d="m8 15 7-3" stroke="#e04020" stroke-width="2"/></symbol>
  <symbol id="camera" viewBox="0 0 16 16"><path d="m1 5 8-3v10l-8 3z" fill="#fff" stroke="#d02020" stroke-width="1.500"/><path d="m9 2 5-1v6" fill="none" stroke="#d02020"/><circle cx="8" cy="7" r="3.500" fill="#c8c8e8" stroke="#333088"/><circle cx="8" cy="7" r="1.300" fill="#222"/><path d="m12 7 3 1v5l-3 1z" fill="#333"/></symbol>
  <symbol id="folder" viewBox="0 0 16 16"><path d="M1 14V4h5l1 2h6v2" fill="#f8e080" stroke="#a87808"/><path d="m1 14 3-6h12l-3 6z" fill="#f4b820" stroke="#a87808"/></symbol>
  <symbol id="folderexp" viewBox="0 0 16 16"><path d="M1 15V5h5l1 2h6v2" fill="#f8e080" stroke="#a87808"/><path d="m1 15 3-6h12l-3 6z" fill="#f4b820" stroke="#a87808"/><path d="M8 1h7M8 3.500h7" stroke="#2a3ab0"/></symbol>
  <symbol id="csys" viewBox="0 0 16 16"><path d="M2 2v9l9 3M2 11l10-6M4 4l8 4-4 5z" fill="none" stroke="#444"/><path d="m10 4 5-1-2 4z" fill="#189048"/><path d="m9 13 5 2-5 1z" fill="#d03030"/><path d="M2 0v3M0 1.500h4" stroke="#2030b0"/></symbol>
  <symbol id="sketch" viewBox="0 0 16 16"><path d="M1.500 2h4v4h-4zM1.500 10h4v5h-4zM9 10h6v5H9zM5.500 12.500H9M3.500 6v4M12 10V7" fill="#fff" stroke="#111" stroke-width="1.200"/><path d="m8 8 1-3 5-5 2 2-5 5z" fill="#f0b860" stroke="#a07020" stroke-width=".7"/></symbol>
  <symbol id="extrude" viewBox="0 0 16 16"><path d="M1 4c4-4 10-4 14-1v9c-2 3-3 1-4 3-3-2-6-2-10-1z" fill="#f4a038" stroke="#a05810"/><path d="M5 4v10M10 4v10M1 4l4 1 5-1 5 1" stroke="#fff0d0" fill="none"/><path d="M1 14c4-1 7-1 10 1" fill="none" stroke="#2030a0"/></symbol>
  <symbol id="bplane" viewBox="0 0 16 16"><path d="M3 3h10l2.500 9.500H.500z" fill="#eef0f6" stroke="#555"/><path d="m5 8 4-3 3 1v4H4z" fill="#d4dcf8" stroke="#2a3a98"/><circle cx="9" cy="8" r="1" fill="#2a3a98"/></symbol>
  <symbol id="nxpart" viewBox="0 0 16 16"><path d="m2 3 5-2 2 1v5l5-1 1 1v4l-6 4-7-3z" fill="#2a62d0" stroke="#123a98"/><path d="m2 3 4 1v5l4 2" fill="none" stroke="#a8c8ff"/></symbol>
  <symbol id="popout" viewBox="0 0 16 16"><path d="M11 4V2H3v12h9v-3" fill="none" stroke="#fff" stroke-width="1.500"/><path d="M6 9c0-2 2-2 7-2M10 4l4 3-4 3" fill="none" stroke="#fff" stroke-width="1.500"/></symbol>
  <symbol id="flag" viewBox="0 0 16 16"><path d="M0 0h16v16H0z" fill="#d4d4d4"/><path d="m3 4 6 2 5-3v6l-5 2-4-2" fill="#f4f4f4" stroke="#888"/><path d="m3 4 4 10M8 6l1 5M5 7l8-1" stroke="#888"/></symbol>
  <symbol id="mic" viewBox="0 0 16 16"><path d="M5.500 4a2.500 3 0 0 1 5 0v4a2.500 3 0 0 1-5 0z" fill="#0a6ccf"/><path d="M3 7c0 6 10 6 10 0M8 11v4M6 15h4" fill="none" stroke="#0a6ccf" stroke-width="1.500"/></symbol>
  <symbol id="keyboard" viewBox="0 0 16 16"><rect y="2" width="16" height="13" rx="2" fill="#0a6ccf"/><path d="M2.500 5.500h11M2.500 8.500h11" stroke="#fff" stroke-width="1.600" stroke-dasharray="2 1"/><path d="M4 12h8" stroke="#fff" stroke-width="1.600"/></symbol>
  <symbol id="apps" viewBox="0 0 16 16"><path d="M1 3q0-2 2-2h4v6H3q-2 0-2-2zM1 9h6v6H3q-2 0-2-2zM9 9h4q2 0 2 2v2q0 2-2 2H9z" fill="#0a6ccf"/><path d="M9.700 1.700h3q1.600 0 1.600 1.600v1.200q0 1.800-1.600 1.800h-3z" fill="none" stroke="#0a6ccf" stroke-width="1.500"/></symbol>
</svg>

<div class="app">
  <header class="titlebar">
    <div class="quick">
      <span class="nx">NX</span>
      <button class="q edge" title="保存"><svg class="ic"><use href="#save"/></svg></button>
      <button class="q" title="撤消"><svg class="ic"><use href="#undo"/></svg></button>
      <button class="drop" aria-label="撤消列表"><i class="caret"></i></button>
      <button class="q edge" title="重做"><svg class="ic"><use href="#redo"/></svg></button>
      <button class="q" title="剪切"><svg class="ic"><use href="#cut"/></svg></button>
      <button class="q" title="复制"><svg class="ic"><use href="#copy"/></svg></button>
      <button class="q edge" title="粘贴"><svg class="ic"><use href="#paste"/></svg></button>
      <button class="q" title="缝合"><svg class="ic"><use href="#book"/></svg></button>
      <button class="drop edge" aria-label="最近命令"><i class="caret"></i></button>
      <button class="q edge" title="触控"><svg class="ic"><use href="#pen"/></svg></button>
      <button class="q"><svg class="ic"><use href="#switch"/></svg>切换窗口</button>
      <button class="q"><svg class="ic"><use href="#window"/></svg>窗口<i class="caret"></i></button>
      <button class="drop last" aria-label="自定义"><i class="caret bar"></i></button>
    </div>
    <h1>NX 12.0.0.27 - 建模</h1>
    <div class="corner">
      <span class="brand">SIEMENS</span>
      <button title="最小化"><svg class="win" viewBox="0 0 12 12"><path d="M2 10.500h8" stroke="#444" stroke-width="2"/></svg></button>
      <button title="还原"><svg class="win" viewBox="0 0 12 12"><path d="M3 4V1h9v6H9M3 1.500h9M.500 5h8v6h-8zM0 5.500h9" fill="none" stroke="#444" stroke-width="1.200"/></svg></button>
      <button title="关闭"><svg class="win" viewBox="0 0 12 12"><path d="m1 1 10 10M11 1 1 11" stroke="#444" stroke-width="1.800"/></svg></button>
    </div>
  </header>

  <nav class="tabs">
    <button class="file">文件(F)</button>
    <button>主页</button>
    <button>装配</button>
    <button>曲线</button>
    <button>分析</button>
    <button class="current">曲面</button>
    <button>视图</button>
    <button>渲染</button>
    <button>工具</button>
    <button>PMI</button>
    <button>应用模块</button>
    <button>内部</button>
    <div class="tools">
      <label class="search"><input type="text" placeholder="查找命令" aria-label="查找命令"><svg class="ic"><use href="#lens"/></svg></label>
      <button title="全屏"><svg class="ic"><use href="#fit"/></svg></button>
      <button title="最小化功能区"><svg class="ic"><use href="#up"/></svg></button>
      <button title="帮助"><svg class="ic" viewBox="0 0 16 16"><circle cx="8" cy="8" r="7" fill="#3a62c4" stroke="#a8b8e0"/><text x="8" y="12" font-size="11" font-weight="700" text-anchor="middle" fill="#fff">?</text></svg></button>
    </div>
  </nav>

  <div class="ribbon">
    <section class="group">
      <div class="cmds">
        <div class="bigs">
          <button class="big"><svg><use href="#nxshape"/></svg>NX 创意塑型</button>
          <button class="big"><svg><use href="#artsurf"/></svg>艺术曲面<i class="caret"></i></button>
        </div>
        <div class="col">
          <button><svg class="ic"><use href="#curves"/></svg>通过曲线组</button>
          <button><svg class="ic"><use href="#sweep"/></svg>扫掠</button>
          <button><svg class="ic"><use href="#lawext"/></svg>规律延伸</button>
        </div>
        <div class="gallery">
          <div class="col frame">
            <button><svg class="ic"><use href="#blendface"/></svg>面倒圆</button>
            <button><svg class="ic"><use href="#blendart"/></svg>美学面倒圆</button>
            <button><svg class="ic"><use href="#blendstyle"/></svg>样式倒圆</button>
          </div>
          <div class="col scroll">
            <button aria-label="上一行"><i class="caret flip"></i></button>
            <button aria-label="下一行"><i class="caret"></i></button>
            <button aria-label="展开"><i class="caret bar"></i></button>
          </div>
        </div>
        <div class="col">
          <button><svg class="ic"><use href="#fourpt"/></svg>四点曲面</button>
          <button><svg class="ic"><use href="#rapid"/></svg>快速造面</button>
          <button><svg class="ic"><use href="#fillsurf"/></svg>填充曲面</button>
        </div>
        <button class="more"><span><svg class="ic"><use href="#moregreen"/></svg></span>更多<i class="caret"></i></button>
      </div>
      <footer>曲面<button aria-label="曲面选项"><i class="caret"></i></button></footer>
    </section>

    <section class="group">
      <div class="cmds">
        <div class="bigs">
          <button class="big"><svg><use href="#extract"/></svg>抽取几何特征</button>
          <button class="big"><svg><use href="#offset"/></svg>偏置曲面</button>
        </div>
        <div class="col two">
          <button><svg class="mid"><use href="#trimsheet"/></svg>修剪片体</button>
          <button><svg class="mid"><use href="#trimbody"/></svg>修剪体</button>
        </div>
        <div class="col">
          <button><svg class="ic"><use href="#trimext"/></svg>修剪和延伸</button>
          <button><svg class="ic"><use href="#extsheet"/></svg>延伸片体</button>
          <button><svg class="ic"><use href="#snip"/></svg>剪断曲面</button>
        </div>
        <div class="col">
          <button><svg class="ic"><use href="#book"/></svg>缝合</button>
          <button><svg class="ic"><use href="#patch"/></svg>修补</button>
          <button><svg class="ic"><use href="#thicken"/></svg>加厚</button>
        </div>
        <button class="more"><span><svg class="ic"><use href="#moretrim"/></svg></span>更多<i class="caret"></i></button>
      </div>
      <footer>曲面操作<button aria-label="曲面操作选项"><i class="caret"></i></button></footer>
    </section>

    <section class="group">
      <div class="cmds">
        <button class="big"><svg><use href="#xform"/></svg>X 型</button>
        <div class="col">
          <button><svg class="ic"><use href="#iform"/></svg>I 型</button>
          <button><svg class="ic"><use href="#matchedge"/></svg>匹配边</button>
          <button><svg class="ic"><use href="#edgesym"/></svg>边对称</button>
        </div>
        <button class="big"><svg><use href="#enlarge"/></svg>扩大</button>
        <div class="col">
          <button><svg class="ic"><use href="#globaldef"/></svg>整体变形</button>
          <button><svg class="ic"><use href="#refine"/></svg>整修面</button>
          <button><svg class="ic"><use href="#edituv"/></svg>编辑 U/V 向</button>
        </div>
        <button class="more"><span><svg class="ic"><use href="#moreedit"/></svg></span>更多<i class="caret"></i></button>
      </div>
      <footer>编辑曲面<button aria-label="编辑曲面选项"><i class="caret"></i></button></footer>
    </section>
    <button class="drop tail" aria-label="功能区选项"><i class="caret"></i></button>
  </div>

  <div class="toolbar">
    <button class="menu"><svg class="ic"><use href="#menu"/></svg><span>菜单(<u>M</u>)</span><i class="caret"></i></button>
    <div class="filters">
      <span class="pick"><select aria-label="类型过滤器"><option>无选择过滤器</option></select></span>
      <span class="pick wide"><select aria-label="选择范围"><option>整个装配</option></select></span>
    </div>
    <div class="set">
      <button class="t"><svg class="ic"><use href="#f1"/></svg></button>
      <button class="t"><svg class="ic"><use href="#f2"/></svg></button>
      <button class="t"><svg class="ic"><use href="#f3"/></svg></button>
      <button class="drop"><i class="caret"></i></button>
      <button class="t"><svg class="ic"><use href="#f4"/></svg></button>
      <button class="t"><svg class="ic"><use href="#f5"/></svg></button>
      <button class="t"><svg class="ic"><use href="#f6"/></svg></button>
      <button class="t"><svg class="ic"><use href="#f7"/></svg></button>
      <button class="drop"><i class="caret"></i></button>
      <button class="t"><svg class="ic"><use href="#f8"/></svg></button>
      <button class="t"><svg class="ic"><use href="#f9"/></svg></button>
      <button class="t on"><svg class="ic"><use href="#s1"/></svg></button>
      <button class="t on"><svg class="ic"><use href="#s2"/></svg></button>
      <button class="t on"><svg class="ic"><use href="#s3"/></svg></button>
      <button class="t"><svg class="ic"><use href="#s4"/></svg></button>
      <button class="t on"><svg class="ic"><use href="#s5"/></svg></button>
      <button class="t on"><svg class="ic"><use href="#s6"/></svg></button>
      <button class="t"><svg class="ic"><use href="#s7"/></svg></button>
      <button class="t on"><svg class="ic"><use href="#s8"/></svg></button>
      <button class="t"><svg class="ic"><use href="#s9"/></svg></button>
      <button class="t on"><svg class="ic"><use href="#s10"/></svg></button>
      <button class="t on"><svg class="ic"><use href="#s11"/></svg></button>
      <button class="t"><svg class="ic"><use href="#s12"/></svg></button>
      <button class="t"><svg class="ic"><use href="#s13"/></svg></button>
      <button class="t"><svg class="ic"><use href="#s14"/></svg></button>
    </div>
    <div class="set">
      <button class="t"><svg class="ic"><use href="#v1"/></svg></button>
      <button class="t"><svg class="ic"><use href="#v2"/></svg></button>
      <button class="t"><svg class="ic"><use href="#v3"/></svg></button>
      <button class="t"><svg class="ic"><use href="#v4"/></svg></button>
      <button class="t"><svg class="ic"><use href="#v5"/></svg></button>
      <button class="t"><svg class="ic"><use href="#v6"/></svg></button>
      <button class="drop"><i class="caret"></i></button>
      <button class="t"><svg class="ic"><use href="#v7"/></svg></button>
      <button class="drop"><i class="caret"></i></button>
      <button class="t"><svg class="ic"><use href="#v8"/></svg></button>
      <button class="drop"><i class="caret"></i></button>
      <button class="t"><svg class="ic"><use href="#v9"/></svg></button>
      <button class="drop"><i class="caret"></i></button>
    </div>
    <button class="drop tail" aria-label="工具条选项"><i class="caret"></i></button>
  </div>

  <main class="main">
    <!-- 资源条 -->
    <aside class="rail">
      <button class="small" title="设置"><svg><use href="#gear"/></svg></button>
      <button title="装配导航器"><svg><use href="#assy"/></svg></button>
      <button title="约束导航器"><svg><use href="#constraint"/></svg></button>
      <button class="current" title="部件导航器"><svg><use href="#partnav"/></svg></button>
      <button title="重用库"><svg><use href="#library"/></svg></button>
      <button class="loose" title="HD3D 工具"><svg><use href="#hd3d"/></svg></button>
      <button class="loose" title="Web 浏览器"><svg><use href="#web"/></svg></button>
      <button class="loose" title="历史记录"><svg><use href="#history"/></svg></button>
      <button title="可视化"><svg><use href="#palette"/></svg></button>
      <button title="Process Studio"><svg><use href="#process"/></svg></button>
      <button title="角色"><svg><use href="#roles"/></svg></button>
    </aside>

    <!-- 部件导航器 -->
    <section class="panel">
      <div class="panel-head"><h2>部件导航器</h2><button class="float" title="浮动"></button></div>
      <div class="tree">
        <div class="tree-view">
          <table>
            <colgroup><col class="c1"><col class="c2"><col></colgroup>
            <thead>
              <tr><th>名称 <i class="sort"></i></th><th>最新</th><th>附</th></tr>
            </thead>
            <tbody id="rows">
              <tr><td><div class="node root first"><button>+</button><svg class="ic"><use href="#mview"/></svg><span>模型视图</span></div></td><td></td><td></td></tr>
              <tr><td><div class="node root"><button>+</button><svg class="ic"><use href="#tick"/></svg><svg class="ic"><use href="#camera"/></svg><span>摄像机</span></div></td><td></td><td></td></tr>
              <tr><td><div class="node root"><button>+</button><svg class="ic"><use href="#folderexp"/></svg><span>用户表达式</span></div></td><td></td><td></td></tr>
              <tr><td><div class="node root last"><button>−</button><svg class="ic"><use href="#folder"/></svg><span>模型历史记录</span></div></td><td></td><td></td></tr>
              <tr><td><label class="node leaf"><input type="checkbox" checked><svg class="ic"><use href="#csys"/></svg><span>基准坐标系 (0)</span></label></td><td><svg class="ic ok"><use href="#tick"/></svg></td><td></td></tr>
              <tr><td><label class="node leaf"><input type="checkbox" checked><svg class="ic"><use href="#sketch"/></svg><span>草图 (1) "SKETCH_0...</span></label></td><td><svg class="ic ok"><use href="#tick"/></svg></td><td></td></tr>
              <tr><td><label class="node leaf"><input type="checkbox" checked><svg class="ic"><use href="#extrude"/></svg><span>拉伸 (2)</span></label></td><td><svg class="ic ok"><use href="#tick"/></svg></td><td></td></tr>
              <tr><td><label class="node leaf"><input type="checkbox" checked><svg class="ic"><use href="#bplane"/></svg><span>有界平面 (3)</span></label></td><td><svg class="ic ok"><use href="#tick"/></svg></td><td></td></tr>
              <tr><td><label class="node leaf"><input type="checkbox" checked><svg class="ic"><use href="#bplane"/></svg><span>有界平面 (4)</span></label></td><td><svg class="ic ok"><use href="#tick"/></svg></td><td></td></tr>
              <tr><td><label class="node leaf last bold"><input type="checkbox" checked><svg class="ic"><use href="#book"/></svg><span>缝合 (5)</span></label></td><td><svg class="ic ok"><use href="#tick"/></svg></td><td></td></tr>
            </tbody>
          </table>
        </div>
        <div class="hbar">
          <button aria-label="向左"><svg viewBox="0 0 8 8"><path d="M6 0 2 4l4 4" fill="none" stroke="#444" stroke-width="2"/></svg></button>
          <div class="track"><div class="thumb"></div></div>
          <button aria-label="向右"><svg viewBox="0 0 8 8"><path d="m2 0 4 4-4 4" fill="none" stroke="#444" stroke-width="2"/></svg></button>
        </div>
      </div>
      <div class="splitter"></div>
      <button class="fold">相关性<svg viewBox="0 0 12 10"><path d="m1 1 5 7 5-7" fill="none" stroke="#0d6284" stroke-width="2"/></svg></button>
      <button class="fold">细节<svg viewBox="0 0 12 10"><path d="m1 1 5 7 5-7" fill="none" stroke="#0d6284" stroke-width="2"/></svg></button>
      <button class="fold">预览<svg viewBox="0 0 12 10"><path d="m1 1 5 7 5-7" fill="none" stroke="#0d6284" stroke-width="2"/></svg></button>
    </section>

    <!-- 图形窗口 -->
    <section class="view">
      <div class="docs">
        <div class="doc">
          <svg class="ic"><use href="#nxpart"/></svg><span>_model1.prt</span><svg class="ic out"><use href="#popout"/></svg>
          <button aria-label="关闭"><svg viewBox="0 0 10 10"><path d="m1 1 8 8M9 1 1 9" stroke="#fff" stroke-width="2.200"/></svg></button>
        </div>
      </div>
      <svg class="scene" viewBox="364 203 1555 815">
        <!-- 实体 -->
        <path d="M836 431 1319 349 1443 537 961 619z" fill="#ff0"/>
        <path d="M836 431 961 619 959 728 835 540z" fill="#aeae00"/>
        <path d="M961 619 1443 537 1442 646 959 728z" fill="#a8a800"/>
        <path d="M835 540V431L1319 349 1443 537 961 619 836 431M1443 537l-1 109" fill="none" stroke="#33330a"/>
        <path d="m835 540 124 188 483-82" fill="none" stroke="#4a66e4" stroke-width="2"/>
        <!-- 基准坐标系 -->
        <path d="m938 695 64-10 20 32" fill="none" stroke="#d8d8b0"/>
        <path d="M938 695v-56" fill="none" stroke="#808070" stroke-width="1.500"/>
        <path d="m938 639 22 32 63-11v57" fill="none" stroke="#3a3a90"/>
        <path d="M960 726V620" stroke="#6a70a0" stroke-width="1.500"/>
        <path d="m960 616 3 13h-6z" fill="#0000a8"/>
        <path d="m959 728 126-21" stroke="#2020d8" stroke-width="1.500"/>
        <path d="m1085 707-15-1 1 6zM915 662l8 9-5 3z" fill="#0000d8"/>
        <path d="m959 728-42-62" stroke="#2020d0" stroke-width="1.500"/>
        <path d="m959 682 3 15-1 29h-3l-1-29z" fill="#123a98"/>
        <path d="m941 701 8 6 8 19z" fill="#28a028"/>
        <path d="m962 728 40-9 9 1-12 4z" fill="#d83020"/>
        <path d="M959 722v14M952 729h14" stroke="#1010d0" stroke-width="1.500"/>
        <g class="axis">
          <text x="960" y="613" fill="#3038c0">Z</text>
          <text x="915" y="664" fill="#9aa4e8">Y</text>
          <text x="1092" y="711" fill="#3038c8">X</text>
          <text x="949" y="680" fill="#3048a8">ZC</text>
          <text x="950" y="699" fill="#489020">YC</text>
          <text x="1007" y="715" fill="#d83a20">XC</text>
        </g>
        <!-- 视图三重轴 -->
        <path d="m421 915 25-4 9 13v22l-25 4-9-9z" fill="#d2d3d6" stroke="#a8a8ac"/>
        <path d="m421 915 9 13 25-4M430 928v22M446 911v22l9 13M446 933l-25 4" fill="none" stroke="#b0b0b4"/>
        <path d="m430 950-12-17" stroke="#2a8a30" stroke-width="2.500"/><path d="m414 928 8 7-5 3z" fill="#2a9a30"/>
        <path d="m430 950 32-5" stroke="#c83830" stroke-width="2.500"/><path d="m471 943-11-2 1 7z" fill="#e04038"/>
        <path d="M430 950v-28" stroke="#1030b8" stroke-width="3"/><path d="m430 914 3 10h-6z" fill="#1030b8"/>
        <circle cx="429" cy="950" r="4.500" fill="url(#gs)"/>
        <g class="axis">
          <text x="430" y="912" fill="#3a48e0">Z</text>
          <text x="413" y="931" fill="#2a9a30">Y</text>
          <text x="476" y="947" fill="#d83a38">X</text>
        </g>
      </svg>
    </section>
  </main>

  <footer class="status">
    <span>选择对象并使用 MB3，或者双击某一对象</span>
    <div class="state">
      <svg class="ic"><use href="#flag"/></svg>
      <svg class="ic"><use href="#fit"/></svg>
    </div>
  </footer>

  <!-- 浮在窗口上方的部件 -->
  <div class="toast"></div>
  <div class="meter"><div></div></div>
  <div class="ime">
    <svg class="sogou" viewBox="0 0 30 30"><g transform="rotate(-12 15 15)"><rect x="2" y="2" width="26" height="27" rx="4" fill="#f0561d"/><text x="15" y="24" font-size="25" font-weight="700" text-anchor="middle" fill="#fff">S</text></g></svg>
    <button>英</button>
    <button aria-label="中英标点"><svg class="ic" viewBox="0 0 16 16"><circle cx="4" cy="5" r="2" fill="#0a6ccf"/><path d="M9 9.500a2 2 0 1 1 4 0c0 2.500-1 4-3 5l-.8-1c1-.6 1.400-1.200 1.500-2A2 2 0 0 1 9 9.500z" fill="#0a6ccf"/></svg></button>
    <button aria-label="语音"><svg class="ic"><use href="#mic"/></svg></button>
    <button aria-label="软键盘"><svg class="ic"><use href="#keyboard"/></svg></button>
    <button aria-label="工具箱"><svg class="ic"><use href="#apps"/></svg></button>
  </div>
  <div class="mark">https://blog.csdn.net/weixin_43911798</div>
</div>
<script src="tree.js"></script>
</body>
</html>
```

FILE: styles.css
```css
* {
  margin: 0;
  padding: 0;
  box-sizing: border-box;
}

body {
  font-family: "Noto Sans", "Noto Sans CJK SC", sans-serif;
  font-size: 11px;
  line-height: 16px;
  color: #1a1a1a;
  background: #fff;
  overflow: hidden;
}

button {
  border: 0;
  background: none;
  font: inherit;
  color: inherit;
  white-space: nowrap;
  display: flex;
  align-items: center;
}

svg {
  display: block;
  flex: none;
}

.sprite {
  position: absolute;
  width: 0;
  height: 0;
}

.ic {
  width: 16px;
  height: 16px;
}

.mid {
  width: 24px;
  height: 24px;
}

.app {
  height: 100vh;
  display: flex;
  flex-direction: column;
  position: relative;
}

/* 下拉小三角 */
.caret {
  display: block;
  width: 0;
  border: 3px solid transparent;
  border-top-color: #111;
  border-bottom-width: 0;
}

.caret.flip {
  border-top-width: 0;
  border-bottom: 3px solid #999;
}

.caret.bar {
  position: relative;
}

.caret.bar::before {
  content: "";
  position: absolute;
  left: -3px;
  top: -6px;
  width: 6px;
  height: 1px;
  background: #111;
}

.drop {
  width: 10px;
  height: 22px;
  justify-content: center;
}

/* 标题栏 */
.titlebar {
  height: 26px;
  flex: none;
  display: flex;
  align-items: center;
}

.quick {
  display: flex;
  align-items: center;
}

.nx {
  width: 42px;
  padding-left: 3px;
  margin-right: 5px;
  font-size: 21px;
  font-weight: 700;
  line-height: 18px;
  color: #7f98a8;
  border-right: 1px solid #d0d0d0;
}

.q {
  height: 18px;
  padding: 0 4px;
  gap: 4px;
}

.quick .drop {
  height: 18px;
  margin-left: 2px;
}

.quick .edge {
  padding-right: 5px;
  margin-right: 2px;
  border-right: 1px solid #d8d8d8;
}

.quick .drop.edge {
  width: 13px;
  padding-right: 3px;
}

.quick .last {
  margin-left: 0;
}

.titlebar h1 {
  flex: 1;
  text-align: center;
  font-size: 12px;
  font-weight: 400;
  color: #111;
}

.corner {
  display: flex;
  align-items: center;
  gap: 11px;
  padding-right: 7px;
}

.brand {
  font-size: 13px;
  font-weight: 700;
  color: #099;
  margin-right: 21px;
}

.win {
  width: 12px;
  height: 12px;
}

/* 选项卡 */
.tabs {
  height: 28px;
  flex: none;
  display: flex;
  align-items: stretch;
  background: #dcdcdc;
}

.tabs > button {
  padding: 0 13px;
  font-size: 13px;
}

.tabs > .file {
  width: 81px;
  margin-right: 2px;
  justify-content: center;
  background: #559db5;
  color: #fff;
}

.tabs > .current {
  background: #fff;
  color: #0d6284;
  border-top: 1px solid #b0b0b0;
}

.tools {
  display: flex;
  align-items: center;
  gap: 10px;
  margin-left: auto;
  padding-right: 8px;
}

.search {
  display: flex;
  align-items: center;
  width: 126px;
  height: 20px;
  border: 1px solid #a6a6a6;
  background: #fff;
}

.search input {
  flex: 1;
  min-width: 0;
  border: 0;
  outline: 0;
  padding-left: 2px;
  font: inherit;
}

.search input::placeholder {
  color: #aaa;
}

/* 功能区 */
.ribbon {
  height: 94px;
  flex: none;
  display: flex;
  padding: 5px 0 1px;
  border-bottom: 1px solid #dcdcdc;
}

.group {
  display: flex;
  flex-direction: column;
  padding: 0 4px 0 12px;
  border-right: 1px solid #dcdcdc;
}

.group:first-child {
  padding-left: 14px;
}

.cmds {
  display: flex;
  align-items: flex-start;
  gap: 10px;
  flex: 1;
  min-height: 0;
}

.bigs {
  display: flex;
  gap: 8px;
}

.big,
.more {
  flex-direction: column;
}

.big svg {
  width: 32px;
  height: 32px;
  margin-bottom: 4px;
}

.big .caret,
.more .caret {
  margin-top: 4px;
}

.col {
  margin-top: -4px;
}

.col button {
  height: 22px;
  gap: 4px;
}

.col.two {
  margin-top: -2px;
}

.col.two button {
  height: 34px;
  gap: 3px;
}

.gallery {
  display: flex;
  margin-left: 2px;
}

.gallery .col {
  margin-top: 0;
}

.gallery .col button {
  height: 21px;
}

.frame {
  border: 1px solid #d4d4d4;
  padding: 0 3px;
}

.scroll button {
  width: 18px;
  justify-content: center;
}

.more span {
  width: 38px;
  height: 35px;
  margin-bottom: 1px;
  display: flex;
  align-items: center;
  justify-content: center;
  border: 1px solid #d8d8d8;
  border-radius: 3px;
}

.group footer {
  display: flex;
  justify-content: center;
  align-items: center;
  flex: none;
  height: 16px;
  padding-right: 24px;
  position: relative;
  color: #0d6284;
}

.group:first-child footer {
  padding-right: 30px;
}

.group footer button {
  position: absolute;
  right: 4px;
  top: 6px;
}

.tail {
  margin-left: auto;
  margin-right: 3px;
  align-self: flex-end;
  height: 16px;
}

/* 选择条 */
.toolbar {
  height: 32px;
  flex: none;
  display: flex;
  align-items: center;
  border-bottom: 1px solid #7f8f8f;
}

.menu {
  height: 22px;
  width: 87px;
  padding-left: 10px;
  gap: 4px;
  border-right: 1px solid #dcdcdc;
}

.filters {
  display: flex;
  gap: 9px;
  margin: 0 3px 0 12px;
}

.pick {
  position: relative;
  width: 133px;
  height: 20px;
}

.pick.wide {
  width: 140px;
}

.pick::after {
  content: "";
  position: absolute;
  right: 5px;
  top: 8px;
  border: 4px solid transparent;
  border-top-color: #111;
  border-bottom: 0;
  pointer-events: none;
}

.pick select {
  width: 100%;
  height: 100%;
  appearance: none;
  padding-left: 2px;
  border: 1px solid #999;
  border-radius: 0;
  background: #fff;
  font: inherit;
  color: inherit;
}

.set {
  display: flex;
  gap: 1px;
  padding-right: 7px;
  margin-right: 7px;
  border-right: 1px solid #dcdcdc;
}

.t {
  width: 24px;
  height: 22px;
  justify-content: center;
}

.t.on {
  background: #cfe5ea;
  border: 1px solid #b4d5dd;
}

/* 主区域 */
.main {
  flex: 1;
  min-height: 0;
  display: flex;
}

.rail {
  width: 32px;
  flex: none;
  display: flex;
  flex-direction: column;
  background: #dcdcdc;
  border-right: 1px solid #a0a0a0;
}

.rail button {
  height: 42px;
  padding-left: 4px;
  justify-content: center;
}

.rail svg {
  width: 24px;
  height: 24px;
}

.rail .small {
  height: 27px;
  margin-bottom: 15px;
  padding: 0;
}

.rail .small svg {
  width: 16px;
  height: 16px;
}

.rail .current {
  height: 44px;
  margin: 0 -1px 0 2px;
  padding-left: 2px;
  background: #fff;
  border: 1px solid #a0a0a0;
  border-right: 0;
}

.rail .loose {
  margin-top: 11px;
}

.panel {
  width: 332px;
  flex: none;
  display: flex;
  flex-direction: column;
  padding: 0 9px 6px 6px;
  border-right: 1px solid #8a9498;
}

.panel-head {
  height: 28px;
  padding: 0 7px 0 4px;
  display: flex;
  align-items: center;
  justify-content: space-between;
}

.panel-head h2 {
  font-size: 12px;
  font-weight: 400;
}

.float {
  width: 12px;
  height: 11px;
  border: 1px solid #111;
  border-top-width: 2px;
}

.tree {
  flex: 1;
  min-height: 0;
  display: flex;
  flex-direction: column;
  padding: 1px;
  border: 1px solid #d4d4d4;
}

.tree-view {
  flex: 1;
  min-height: 0;
  overflow: hidden;
}

.tree table {
  width: 100%;
  table-layout: fixed;
  border-collapse: collapse;
  font-size: 12px;
}

.c1 {
  width: 199px;
}

.c2 {
  width: 100px;
}

.tree th {
  height: 21px;
  padding-left: 6px;
  text-align: left;
  font-weight: 400;
  white-space: nowrap;
  overflow: hidden;
  background: #f0f0f0;
  border-right: 1px solid #d0d0d0;
  border-bottom: 1px solid #d0d0d0;
}

.tree td {
  height: 20px;
  border-right: 1px solid #e6e6e6;
  border-bottom: 1px solid #e6e6e6;
}

.tree th:last-child,
.tree td:last-child {
  border-right: 0;
}

.tree tbody tr:nth-child(even) {
  background: #f9f9f9;
}

.sort {
  display: inline-block;
  margin: 0 0 2px 14px;
  border: 5px solid transparent;
  border-top: 0;
  border-bottom-color: #111;
}

.node {
  height: 19px;
  display: flex;
  align-items: center;
  overflow: hidden;
  white-space: nowrap;
  position: relative;
}

.root {
  padding-left: 5px;
}

.root button {
  width: 9px;
  height: 9px;
  margin-right: 5px;
  justify-content: center;
  border: 1px solid #c4c4c4;
  background: #fff;
  color: #000;
  line-height: 7px;
  position: relative;
}

.root::before {
  content: "";
  position: absolute;
  left: 9px;
  top: 0;
  width: 9px;
  height: 100%;
  border-left: 1px dotted #999;
}

.root.first::before {
  top: 9px;
}

.root.last::before {
  height: 9px;
}

.root::after {
  content: "";
  position: absolute;
  left: 15px;
  top: 9px;
  width: 4px;
  border-top: 1px dotted #999;
}

.root span {
  margin-left: 3px;
}

.leaf {
  padding-left: 40px;
}

.leaf::before {
  content: "";
  position: absolute;
  left: 28px;
  top: 0;
  width: 10px;
  height: 10px;
  border-left: 1px dotted #999;
  border-bottom: 1px dotted #999;
}

.leaf:not(.last)::after {
  content: "";
  position: absolute;
  left: 28px;
  top: 10px;
  height: 10px;
  border-left: 1px dotted #999;
}

.leaf input {
  appearance: none;
  width: 12px;
  height: 12px;
  border: 1px solid #000;
  background: #fff;
  margin-right: 2px;
  display: flex;
  align-items: center;
  justify-content: center;
}

.leaf input:checked::before {
  content: "✔";
  font-family: "DejaVu Sans", sans-serif;
  font-size: 14px;
  line-height: 10px;
  color: #12a82c;
}

.leaf span {
  margin-left: 3px;
}

.bold {
  font-weight: 700;
}

.ok {
  margin-left: 4px;
}

.hbar {
  height: 16px;
  flex: none;
  display: flex;
  background: #f0f0f0;
}

.hbar button {
  width: 17px;
  justify-content: center;
}

.hbar svg {
  width: 8px;
  height: 8px;
}

.track {
  flex: 1;
}

.thumb {
  width: 78%;
  height: 100%;
  background: #cdcdcd;
}

.splitter {
  height: 5px;
  flex: none;
  background: #dcdcdc;
  border: 1px solid #a6a6a6;
}

.fold {
  height: 24px;
  flex: none;
  justify-content: space-between;
  padding: 2px 6px 0 7px;
  font-size: 14px;
  color: #0d6284;
  border-bottom: 2px solid #cfcfcf;
}

.fold svg {
  width: 12px;
  height: 10px;
}

/* 图形窗口 */
.view {
  flex: 1;
  min-width: 0;
  display: flex;
  flex-direction: column;
}

.docs {
  flex: none;
  display: flex;
  height: 23px;
  border-bottom: 2px solid #559db5;
}

.doc {
  display: flex;
  align-items: center;
  padding: 0 6px;
  font-size: 12px;
  color: #fff;
  background: #559db5;
}

.doc span {
  margin: 0 5px;
}

.doc .out {
  width: 14px;
  height: 14px;
  margin-right: 4px;
}

.doc button svg {
  width: 10px;
  height: 10px;
}

.scene {
  flex: 1;
  min-height: 0;
  width: 100%;
  background: linear-gradient(#b4b5b6, #e6e8e9 68%, #e6e8e9);
}

.axis {
  font-family: "Liberation Sans", sans-serif;
  font-size: 13px;
  text-anchor: middle;
}

/* 状态栏 */
.status {
  height: 21px;
  flex: none;
  display: flex;
  align-items: center;
  justify-content: space-between;
  padding: 0 54px 0 3px;
  border-top: 1px solid #9a9a9a;
  font-weight: 700;
}

.state {
  display: flex;
  gap: 4px;
}

.toast {
  position: absolute;
  top: 0;
  left: 1316px;
  width: 282px;
  height: 1px;
  background: #c0c0c0;
  box-shadow: 0 1px 4px #888;
}

.meter {
  position: absolute;
  right: 1px;
  bottom: 111px;
  width: 8px;
  height: 57px;
  padding: 15px 1px 2px;
  border-radius: 4px;
  background: #555;
}

.meter div {
  height: 100%;
  background: repeating-linear-gradient(#4cc070 0 1px, #2d6a44 1px 2px);
}

.ime {
  position: absolute;
  right: 412px;
  bottom: 0;
  height: 25px;
  padding: 0 4px 0 32px;
  display: flex;
  align-items: center;
  gap: 8px;
  background: #fff;
  border: 1px solid #b4cfe4;
  border-bottom: 0;
  font-size: 14px;
  font-weight: 700;
  color: #0a6ccf;
}

.sogou {
  position: absolute;
  left: -7px;
  top: -6px;
  width: 32px;
  height: 32px;
}

.mark {
  position: absolute;
  right: 10px;
  bottom: 9px;
  font-family: "Liberation Sans", sans-serif;
  font-size: 16px;
  line-height: 20px;
  color: rgba(255, 255, 255, 0.75);
  text-shadow: 0 0 1px #bbb;
}
```

FILE: tree.js
```js
// 用空行把导航树填满
var rows = document.getElementById('rows');
for (var i = 0; i < 25; i++) {
  var tr = document.createElement('tr');
  tr.innerHTML = '<td></td><td></td><td></td>';
  rows.appendChild(tr);
}
```
